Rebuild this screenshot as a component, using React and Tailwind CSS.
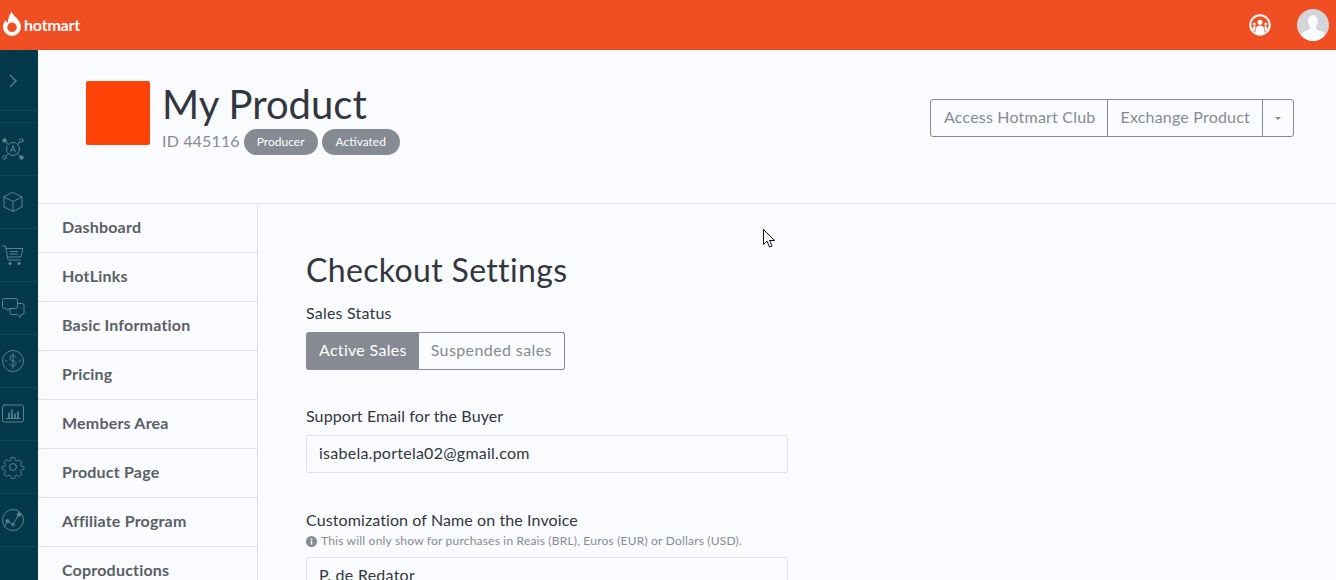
const navItems = [
  "Dashboard",
  "HotLinks",
  "Basic Information",
  "Pricing",
  "Members Area",
  "Product Page",
  "Affiliate Program",
  "Coproductions",
];

function RailIcon({ children }) {
  return (
    <div className="flex h-[53px] items-center justify-center border-b border-[#0f4a5c] pr-[12px]">
      <svg
        width="24"
        height="24"
        viewBox="0 0 24 24"
        fill="none"
        stroke="#5f8290"
        strokeWidth="1"
        strokeLinecap="round"
        strokeLinejoin="round"
      >
        {children}
      </svg>
    </div>
  );
}

function Rail() {
  return (
    <aside className="w-[38px] shrink-0 bg-[#03394b]">
      <div className="flex h-[61px] items-center justify-center border-b border-[#0f4a5c] pr-[12px] pt-[2px]">
        <svg width="12" height="16" viewBox="0 0 12 16" fill="none" stroke="#5f8290" strokeWidth="1.4">
          <path d="M3 2l6 6-6 6" />
        </svg>
      </div>
      <div className="h-[12px] border-b border-[#0f4a5c]" />
      <RailIcon>
        <circle cx="12" cy="12" r="6.5" />
        <path d="M9.500 15l2.500-6.500 2.500 6.500M10.300 13h3.400" />
        <circle cx="3.500" cy="3.500" r="1.800" fill="#5f8290" />
        <circle cx="20.500" cy="3.500" r="1.800" />
        <circle cx="3.500" cy="20.500" r="1.800" />
        <circle cx="20.500" cy="20.500" r="1.800" fill="#5f8290" />
        <path d="M5 5l2.500 2.500M19 5l-2.500 2.500M5 19l2.500-2.500M19 19l-2.500-2.500" />
      </RailIcon>
      <RailIcon>
        <path d="M12 2.500l9 4.500v10l-9 4.500-9-4.500v-10z" />
        <path d="M3 7l9 4.500 9-4.500M12 11.500v10" />
      </RailIcon>
      <RailIcon>
        <path d="M1.500 3h3l2.500 14h12.500" />
        <path d="M5 5.500h17l-2 8.500h-13.500" />
        <path d="M9.500 8.500h7M9 11h8" />
        <circle cx="9" cy="20.500" r="1.200" fill="#5f8290" />
        <circle cx="18" cy="20.500" r="1.200" fill="#5f8290" />
      </RailIcon>
      <RailIcon>
        <path d="M3.500 2.500h11a2 2 0 0 1 2 2v6a2 2 0 0 1-2 2h-6l-2 2-1-2h-2a2 2 0 0 1-2-2v-6a2 2 0 0 1 2-2z" />
        <path d="M16.500 7.500h4.500a2 2 0 0 1 2 2v7a2 2 0 0 1-2 2h-1l-1 3-2.500-3h-5.500a2 2 0 0 1-2-2v-4" />
      </RailIcon>
      <RailIcon>
        <circle cx="12" cy="12" r="10.500" />
        <path d="M15 8.500c-.5-1.300-1.700-2-3-2-1.800 0-3 1-3 2.500 0 3.500 6 2 6 5.500 0 1.500-1.300 2.500-3 2.500-1.500 0-2.800-.8-3.200-2.200M12 4.500v15" />
        <path d="M4.500 12h1.500M18 12h1.500" />
      </RailIcon>
      <RailIcon>
        <rect x="1.500" y="3" width="21" height="17" rx="2" />
        <path d="M5 16.500h14" />
        <path d="M8 16v-5M11 16v-8M14 16v-4M17 16v-6" strokeWidth="1.600" />
      </RailIcon>
      <RailIcon>
        <circle cx="12" cy="12" r="3.500" />
        <path d="M10 1.500h4l.7 3.200 2 .9 2.800-1.700 2.700 2.800-1.700 2.800.8 2 3.200.5v3l-3.200.7-.8 2 1.700 2.800-2.700 2.700-2.800-1.700-2 .8-.7 3.200h-4l-.7-3.200-2-.8-2.800 1.700-2.700-2.700 1.700-2.800-.8-2-3.200-.7v-3l3.200-.5.800-2-1.700-2.800 2.700-2.800 2.800 1.700 2-.9z" transform="translate(1.400 1.200) scale(.88)" />
      </RailIcon>
      <RailIcon>
        <circle cx="12" cy="12" r="10.500" />
        <path d="M3 19l3.500-5.500 5.500 3 5.500-9.500" />
        <circle cx="6.500" cy="13" r="1.500" fill="#5f8290" />
        <circle cx="12" cy="16.500" r="1.500" />
        <circle cx="18" cy="6.500" r="1.700" fill="#5f8290" />
      </RailIcon>
    </aside>
  );
}

function Topbar() {
  return (
    <header className="flex h-[50px] shrink-0 items-center justify-between bg-[#f04e23] pl-[3px] pr-[7px]">
      <div className="flex items-center gap-[3px]">
        <svg width="18" height="25" viewBox="0 0 18 25" className="-mt-[3px]">
          <path
            fillRule="evenodd"
            fill="#fff"
            d="M8.500 0c.5 2.500 2 4 4 6 3 2.800 5.500 6 5.500 10a9 9 0 0 1-18 0c0-3 1.200-5.200 3-7 0 1.500.5 2.500 1.500 3 .5-4 2-8.500 4.500-12zM9 11.500a4.800 4.800 0 1 0 0 9.600 4.800 4.800 0 0 0 0-9.600z"
          />
        </svg>
        <span className="pb-[1px] text-[16px] font-bold tracking-[-0.2px] text-white">hotmart</span>
      </div>
      <div className="flex items-center gap-[26px]">
        <svg width="22" height="22" viewBox="0 0 22 22">
          <circle cx="11" cy="11" r="9.700" fill="none" stroke="#fff" strokeWidth="2" />
          <circle cx="11" cy="8.300" r="2.500" fill="#fff" />
          <circle cx="5.200" cy="10" r="1.500" fill="#fff" />
          <circle cx="16.800" cy="10" r="1.500" fill="#fff" />
          <path fill="#fff" d="M3.500 15c0-1.800 1-2.800 2-2.800h1.500c-.7 1-1 2-1 3.500v2zM18.500 15c0-1.800-1-2.800-2-2.800h-1.500c.7 1 1 2 1 3.500v2z" />
          <path fill="#fff" d="M6.500 16c0-2.800 1.800-4.500 4.500-4.500s4.500 1.700 4.500 4.500v3.300c-1.300.7-2.900 1.200-4.500 1.200s-3.200-.5-4.500-1.200z" />
        </svg>
        <svg width="32" height="32" viewBox="0 0 32 32">
          <clipPath id="avatar">
            <circle cx="16" cy="16" r="16" />
          </clipPath>
          <g clipPath="url(#avatar)">
            <rect width="32" height="32" fill="#d3d5d8" />
            <ellipse cx="16" cy="12.500" rx="5" ry="6.500" fill="#fafbfe" />
            <path fill="#fafbfe" d="M13 17h6v3l8 3.500V32H5v-8.500l8-3.500z" />
          </g>
        </svg>
      </div>
    </header>
  );
}

function ProductHeader() {
  return (
    <div className="flex h-[154px] shrink-0 items-start justify-between border-b border-[#dfe1e7] pl-[48px] pr-[42px]">
      <div className="mt-[31px] flex">
        <div className="h-16 w-16 rounded-[2px] bg-[#ff4205]" />
        <div className="ml-3">
          <h1 className="-mt-[1px] text-[40px] leading-[48px] text-[#32363d]">My Product</h1>
          <div className="flex items-center gap-1">
            <span className="pb-[2px] text-[16px] leading-[26px] tracking-[0.15px] text-[#868b93]">ID 445116</span>
            <span className="flex h-[26px] items-center rounded-full bg-[#868b93] px-[13px] text-[12px] text-white">
              Producer
            </span>
            <span className="flex h-[26px] items-center rounded-full bg-[#868b93] px-[14px] text-[12px] text-white">
              Activated
            </span>
          </div>
        </div>
      </div>
      <div className="mt-[49px] flex h-[38px] rounded-[3px] border border-[#868b93] text-[16px] tracking-[0.2px] text-[#868b93]">
        <span className="flex items-center pb-[2px] pl-[13px] pr-[12px]">Access Hotmart Club</span>
        <span className="flex items-center border-l border-[#868b93] px-[12px] pb-[2px]">Exchange Product</span>
        <span className="flex w-[31px] items-center justify-center border-l border-[#868b93]">
          <span className="h-0 w-0 border-x-[3px] border-t-[3px] border-x-transparent border-t-[#868b93]" />
        </span>
      </div>
    </div>
  );
}

function Field({ label, value, hint, className }) {
  return (
    <div className={className}>
      <div className="text-[16px] leading-[20px] tracking-[0.1px] text-[#32363d]">{label}</div>
      {hint ? (
        <div className="mt-[3px] flex h-[16px] items-center gap-[4px] text-[12px] tracking-[0.2px] text-[#868b93]">
          <svg width="11" height="11" viewBox="0 0 10 10">
            <circle cx="5" cy="5" r="5" fill="#868b93" />
            <rect x="4.300" y="4.200" width="1.400" height="3.600" fill="#fafbfe" />
            <rect x="4.300" y="2.200" width="1.400" height="1.400" fill="#fafbfe" />
          </svg>
          {hint}
        </div>
      ) : null}
      <div
        className={`flex h-[38px] w-[482px] items-center rounded-[2px] border border-[#dfe1e7] px-[12px] pb-[2px] text-[16px] tracking-[0.25px] text-[#32363d] ${
          hint ? "mt-[8px]" : "mt-[9px]"
        }`}
      >
        {value}
      </div>
    </div>
  );
}

export default function App() {
  return (
    <div className="relative flex h-[580px] w-[1336px] flex-col overflow-hidden bg-[#fafbfe] font-['Lato','Open_Sans',sans-serif]">
      <Topbar />
      <div className="flex min-h-0 flex-1">
        <Rail />
        <div className="flex min-w-0 flex-1 flex-col">
          <ProductHeader />
          <div className="flex min-h-0 flex-1">
            <nav className="w-[220px] shrink-0 border-r border-[#dfe1e7]">
              {navItems.map((item) => (
                <div
                  key={item}
                  className="flex h-[49px] items-center border-b border-[#dfe1e7] pb-[2px] pl-6 text-[16px] font-bold tracking-[0.2px] text-[#5a5f66]"
                >
                  {item}
                </div>
              ))}
            </nav>
            <main className="pl-[48px] pt-[46px]">
              <h2 className="text-[32px] leading-[40px] tracking-[0.35px] text-[#32363d]">Checkout Settings</h2>
              <div className="mt-[13px] text-[16px] leading-[20px] tracking-[0.2px] text-[#32363d]">Sales Status</div>
              <div className="mt-[9px] flex h-[38px] w-fit text-[16px] tracking-[0.3px]">
                <span className="flex items-center rounded-l-[3px] bg-[#868b93] pb-[2px] pl-[13px] pr-[12px] text-white">
                  Active Sales
                </span>
                <span className="flex items-center rounded-r-[3px] border border-l-0 border-[#868b93] px-[12px] pb-[2px] tracking-[0.4px] text-[#868b93]">
                  Suspended sales
                </span>
              </div>
              <Field className="mt-[36px]" label="Support Email for the Buyer" value="isabela.portela02@gmail.com" />
              <Field
                className="mt-[37px]"
                label="Customization of Name on the Invoice"
                hint="This will only show for purchases in Reais (BRL), Euros (EUR) or Dollars (USD)."
                value="P. de Redator"
              />
            </main>
          </div>
        </div>
      </div>
      {/* mouse pointer caught in the capture */}
      <svg className="absolute left-[763px] top-[229px]" width="13" height="19" viewBox="0 0 13 19">
        <path d="M.5.500v15l3.500-3.500 2.500 6 2.500-1-2.500-5.500h5z" fill="#fff" stroke="#111" strokeWidth="1" />
      </svg>
    </div>
  );
}
